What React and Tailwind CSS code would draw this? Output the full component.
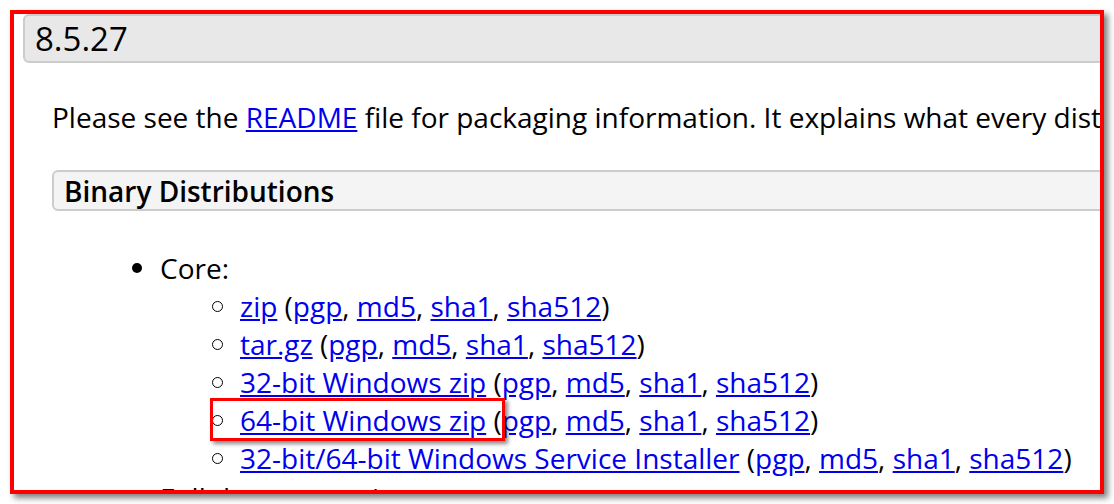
const links = ["pgp", "md5", "sha1", "sha512"];

const Sums = () => (
  <span>
    {" ("}
    {links.map((l, i) => (
      <span key={l}>
        <a href="#" className="text-[#0000ee] underline">
          {l}
        </a>
        {i < links.length - 1 ? ", " : ""}
      </span>
    ))}
    {")"}
  </span>
);

const SubItem = ({ label, highlight }) => (
  <li className="flex items-center">
    <span className="ml-[-28px] mr-[17px] h-[11px] w-[11px] shrink-0 rounded-full border border-black"></span>
    <span className="relative">
      {/* red highlight box */}
      {highlight && (
        <span className="pointer-events-none absolute left-[-30px] top-[-3px] h-[43px] w-[295px] border-[3px] border-[#ff0000] shadow-[3px_3px_4px_rgba(0,0,0,0.45)]"></span>
      )}
      <a href="#" className="text-[#0000ee] underline">
        {label}
      </a>
      <Sums />
    </span>
  </li>
);

const App = () => {
  return (
    <div
      className="h-[504px] w-[1114px] overflow-hidden bg-white pl-[10px] pt-[10px] text-black"
      style={{ fontFamily: '"Open Sans", "Noto Sans", sans-serif' }}
    >
      {/* screenshot frame */}
      <div className="h-[484px] w-[1094px] overflow-hidden border-4 border-[#ff0000] bg-white shadow-[4px_4px_6px_rgba(0,0,0,0.5)]">
        {/* version heading */}
        <div className="ml-[9px] flex h-[49px] w-[1200px] items-center rounded-[6px] border-2 border-[#cccccc] bg-[#e8e8e8] pl-[10px]">
          <h3 className="text-[33px] font-medium leading-none">8.5.27</h3>
        </div>

        <div className="pl-[38px]">
          {/* intro */}
          <p className="mt-[35px] whitespace-nowrap text-[28px] leading-[38px]">
            Please see the{" "}
            <a href="#" className="text-[#0000ee] underline">
              README
            </a>{" "}
            file for packaging information. It explains what every distribution contains.
          </p>

          {/* section header */}
          <div className="mt-[34px] flex h-[41px] w-[1200px] items-center rounded-[6px] border-2 border-[#cccccc] bg-[#f4f4f4] pl-[10px]">
            <h4 className="text-[28px] font-semibold leading-none">Binary Distributions</h4>
          </div>

          <ul className="mt-[38px] whitespace-nowrap pl-[108px] text-[28px] leading-[38px]">
            <li>
              <div className="flex items-center">
                <span className="ml-[-28px] mr-[18px] h-[10px] w-[10px] rounded-full bg-black"></span>
                <span>Core:</span>
              </div>
              <ul className="pl-[80px]">
                <SubItem label="zip" />
                <SubItem label="tar.gz" />
                <SubItem label="32-bit Windows zip" />
                <SubItem label="64-bit Windows zip" highlight />
                <SubItem label="32-bit/64-bit Windows Service Installer" />
              </ul>
            </li>
            <li className="mt-[2px]">
              <div className="flex items-center">
                <span className="ml-[-28px] mr-[18px] h-[10px] w-[10px] rounded-full bg-black"></span>
                <span>Full documentation:</span>
              </div>
            </li>
          </ul>
        </div>
      </div>
    </div>
  );
};

export default App;
